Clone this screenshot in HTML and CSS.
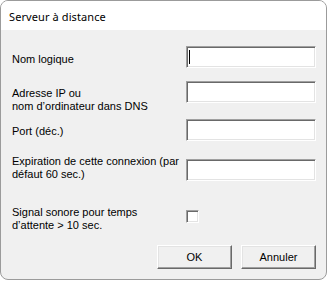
FILE: index.html
```html
<!DOCTYPE html>
<html lang="fr">
<head>
    <meta charset="UTF-8">
    <meta name="viewport" content="width=device-width, initial-scale=1.0">
    <title>Serveur à distance</title>
    <link rel="stylesheet" href="styles.css">
</head>
<body>
    <div class="dialog">
        <div class="titlebar">Serveur à distance</div>
        <div class="content">
            <div class="row row-name">
                <label class="label">Nom logique</label>
                <div class="field"><span class="caret"></span></div>
            </div>
            <div class="row row-ip">
                <label class="label">Adresse IP ou<br>nom d’ordinateur dans DNS</label>
                <div class="field"></div>
            </div>
            <div class="row row-port">
                <label class="label">Port (déc.)</label>
                <div class="field"></div>
            </div>
            <div class="row row-timeout">
                <label class="label">Expiration de cette connexion (par<br>défaut 60 sec.)</label>
                <div class="field"></div>
            </div>
            <div class="row row-beep">
                <label class="label">Signal sonore pour temps<br>d’attente &gt; 10 sec.</label>
                <div class="check"></div>
            </div>
            <div class="buttons">
                <button type="button" class="btn">OK</button>
                <button type="button" class="btn">Annuler</button>
            </div>
        </div>
    </div>
</body>
</html>
```

FILE: styles.css
```css
body {
    margin: 0;
    padding: 0;
    background-color: white;
    font-family: 'Liberation Sans', Arial, sans-serif;
    font-size: 11px;
    color: #000;
}

.dialog {
    width: 327px;
    height: 280px;
    box-sizing: border-box;
    border: 1px solid #9b9b9b;
    border-radius: 8px;
    background-color: #f0f0f0;
    overflow: hidden;
}

.titlebar {
    height: 29px;
    line-height: 31px;
    padding-left: 8px;
    background-color: white;
    font-family: 'Noto Sans', sans-serif;
    font-size: 11px;
    letter-spacing: 0.1px;
}

.content {
    padding: 0 10px 0 11px;
}

.row {
    display: flex;
    align-items: flex-start;
}

.label {
    width: 174px;
    line-height: 13px;
    white-space: nowrap;
}

.field {
    width: 130px;
    height: 22px;
    box-sizing: border-box;
    background-color: white;
    border: 1px solid;
    border-color: #a0a0a0 #fff #fff #a0a0a0;
    box-shadow: inset 1px 1px #696969, inset -1px -1px #e3e3e3;
    padding: 3px 0 0 2px;
}

.caret {
    display: block;
    width: 1px;
    height: 14px;
    background-color: black;
}

.check {
    width: 13px;
    height: 13px;
    box-sizing: border-box;
    background-color: white;
    border: 1px solid;
    border-color: #a0a0a0 #fff #fff #a0a0a0;
    box-shadow: inset 1px 1px #696969, inset -1px -1px #e3e3e3;
    margin-top: 4px;
}

.row-name { margin-top: 16px; }
.row-name .label { padding-top: 7px; }

.row-ip { margin-top: 13px; }
.row-ip .label { padding-top: 6px; }

.row-port { margin-top: 6px; }
.row-port .label { padding-top: 6px; }

.row-timeout { margin-top: 14px; }
.row-timeout .field { margin-top: 4px; }

.row-beep { margin-top: 25px; }

.buttons {
    display: flex;
    justify-content: flex-end;
    gap: 9px;
    margin-top: 13px;
}

.btn {
    width: 75px;
    height: 24px;
    padding: 0;
    background-color: #f0f0f0;
    border: 1px solid;
    border-color: #fff #696969 #696969 #fff;
    box-shadow: inset -1px -1px #a0a0a0, inset 1px 1px #e3e3e3;
    font-family: 'Liberation Sans', Arial, sans-serif;
    font-size: 11px;
    color: #000;
}
```
